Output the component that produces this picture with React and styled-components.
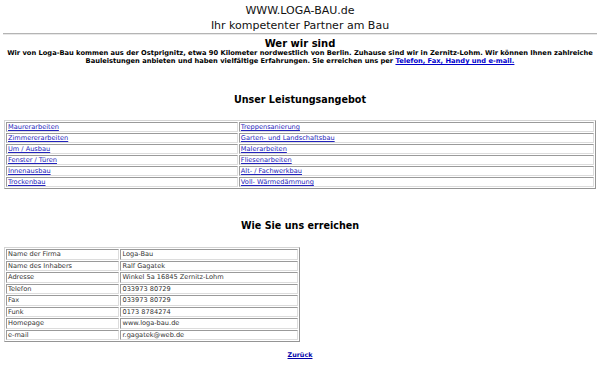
import React from 'react';
import styled, { createGlobalStyle } from 'styled-components';

const GlobalStyle = createGlobalStyle`
  body {
    margin: 0;
    background: #ffffff;
    font-family: "DejaVu Sans", Verdana, sans-serif;
    color: #000;
  }
`;

const Page = styled.div`
  padding: 3px 4px 0 4px;
`;

const Header = styled.div`
  text-align: center;
  font-size: 11px;
  line-height: 15px;
  color: #111;
`;

const Rule = styled.hr`
  margin: 0 -1px;
  height: 0;
  border: none;
  border-top: 1px solid #b4b4b4;
  border-bottom: 1px solid #e8e8e8;
`;

const Heading = styled.h2`
  margin: ${(p) => p.$top}px 0 0 0;
  text-align: center;
  font-size: ${(p) => p.$size || 9.6}px;
  line-height: ${(p) => p.$lh || 12}px;
  font-weight: bold;
`;

const Intro = styled.p`
  margin: 0;
  text-align: center;
  font-size: 6.7px;
  line-height: 8px;
  font-weight: bold;
`;

const Link = styled.a`
  color: ${(p) => p.$color || '#0000cc'};
  text-decoration: underline;
`;

const Table = styled.table`
  margin-top: ${(p) => p.$top}px;
  width: ${(p) => p.$width};
  border: 1px solid;
  border-color: #d4d4d4 #959595 #959595 #d4d4d4;
  border-spacing: 1px;
  border-collapse: separate;
`;

const Cell = styled.td`
  width: ${(p) => p.$width || 'auto'};
  border: 1px solid;
  border-color: #9a9a9a #dcdcdc #dcdcdc #9a9a9a;
  padding: 0 1px;
  font-size: 6.6px;
  line-height: ${(p) => p.$lh}px;
  color: #333;
  white-space: nowrap;
`;

const Footer = styled.div`
  margin-top: 9px;
  text-align: center;
  font-size: 6.4px;
  line-height: 8px;
  font-weight: bold;
`;

const services = [
  ['Maurerarbeiten', 'Treppensanierung'],
  ['Zimmererarbeiten', 'Garten- und Landschaftsbau'],
  ['Um / Ausbau', 'Malerarbeiten'],
  ['Fenster / Türen', 'Fliesenarbeiten'],
  ['Innenausbau', 'Alt- / Fachwerkbau'],
  ['Trockenbau', 'Voll- Wärmedämmung'],
];

const contact = [
  ['Name der Firma', 'Loga-Bau'],
  ['Name des Inhabers', 'Ralf Gagatek'],
  ['Adresse', 'Winkel 5a 16845 Zernitz-Lohm'],
  ['Telefon', '033973 80729'],
  ['Fax', '033973 80729'],
  ['Funk', '0173 8784274'],
  ['Homepage', 'www.loga-bau.de'],
  ['e-mail', 'r.gagatek@web.de'],
];

const App = () => {
  return (
    <Page>
      <GlobalStyle />
      <Header>
        <div>WWW.LOGA-BAU.de</div>
        <div>Ihr kompetenter Partner am Bau</div>
      </Header>
      <Rule />
      <Heading $top={3} $size={10} $lh={11}>Wer wir sind</Heading>
      <Intro>
        Wir von Loga-Bau kommen aus der Ostprignitz, etwa 90 Kilometer nordwestlich von Berlin. Zuhause sind wir in Zernitz-Lohm. Wir können Ihnen zahlreiche Bauleistungen anbieten und haben vielfältige Erfahrungen. Sie erreichen uns per{' '}
        <Link href="#kontakt">Telefon, Fax, Handy und e-mail.</Link>
      </Intro>

      <Heading $top={29}>Unser Leistungsangebot</Heading>
      <Table $top={14} $width="100%">
        <tbody>
          {services.map(([a, b]) => (
            <tr key={a}>
              <Cell $width="39.5%" $lh={8}>
                <Link href="#" $color="#2222bb">{a}</Link>
              </Cell>
              <Cell $lh={8}>
                <Link href="#" $color="#2222bb">{b}</Link>
              </Cell>
            </tr>
          ))}
        </tbody>
      </Table>

      <Heading $top={31}>Wie Sie uns erreichen</Heading>
      <Table $top={15} $width="50%" id="kontakt">
        <tbody>
          {contact.map(([label, value]) => (
            <tr key={label}>
              <Cell $width="39%" $lh={8.5}>{label}</Cell>
              <Cell $lh={8.5}>{value}</Cell>
            </tr>
          ))}
        </tbody>
      </Table>

      <Footer>
        <Link href="#" $color="#0000aa">Zurück</Link>
      </Footer>
    </Page>
  );
};

export default App;
